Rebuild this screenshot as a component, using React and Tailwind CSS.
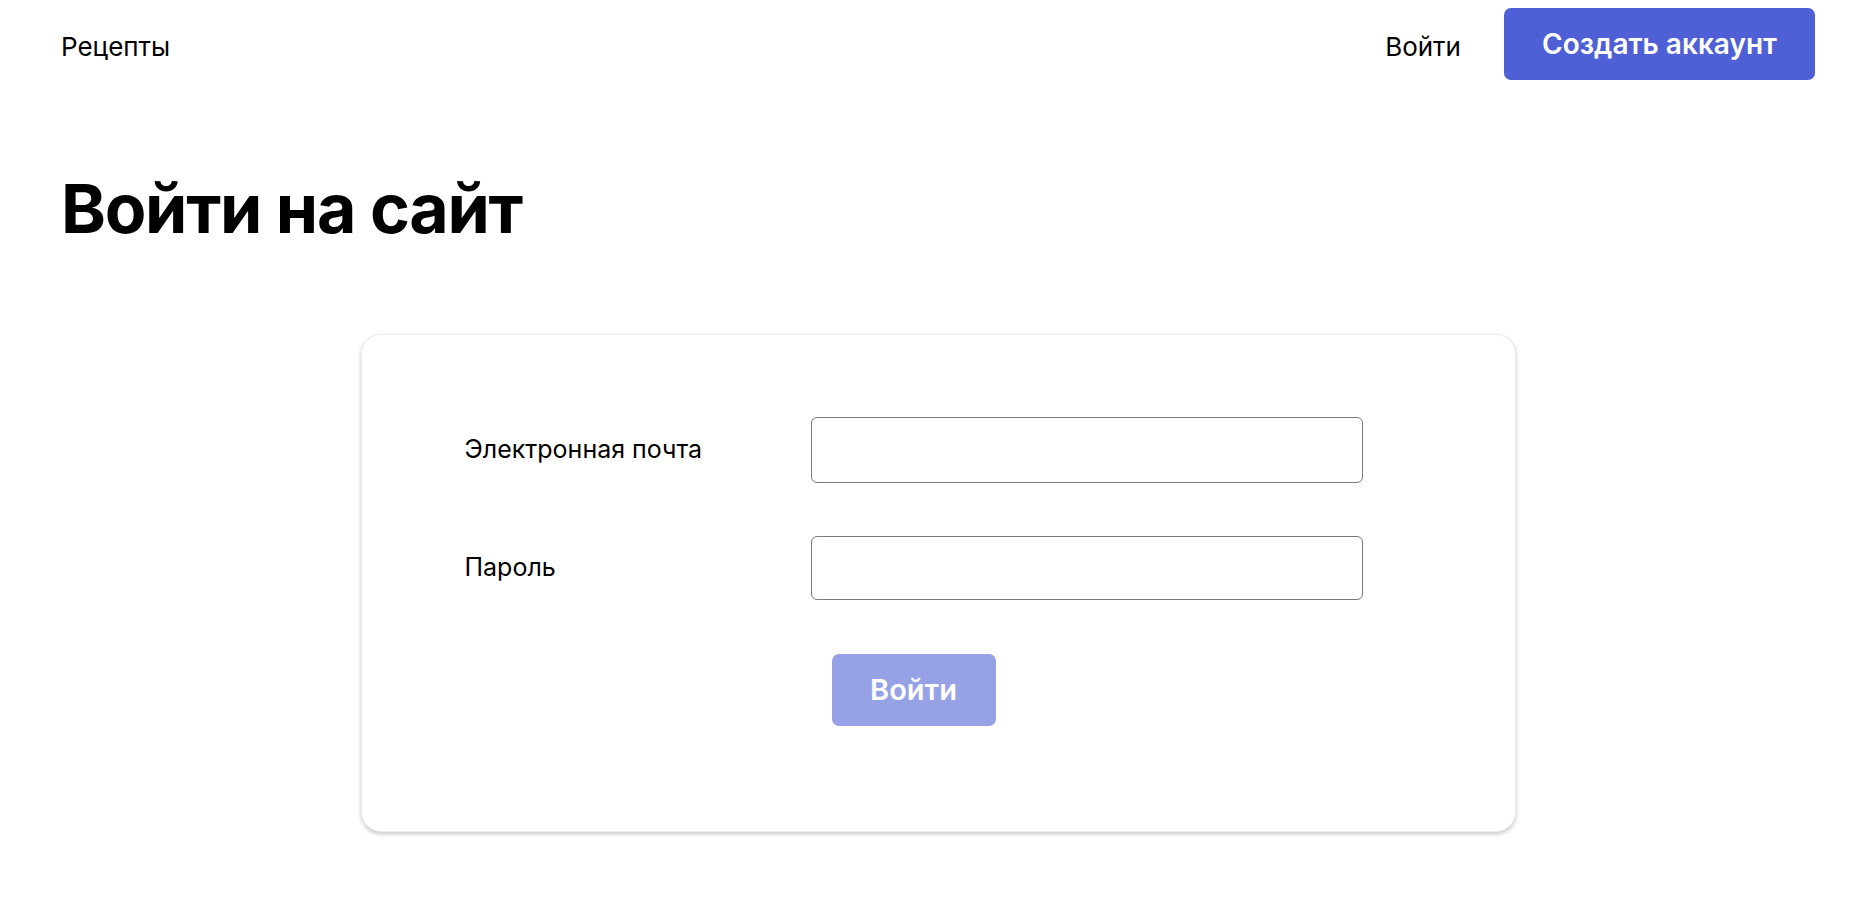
import React from 'react'

export default function App() {
  const [email, setEmail] = React.useState('')
  const [password, setPassword] = React.useState('')

  return (
    <div className="min-h-screen bg-white text-black font-['Inter','Noto_Sans',sans-serif]">
      <header className="flex items-center justify-between pl-[61px] pr-[61px] pt-2">
        <a href="#" className="mt-[6px] text-[26px] leading-none">Рецепты</a>
        <div className="flex items-center gap-[43px]">
          <a href="#" className="mt-[6px] text-[26px] leading-none">Войти</a>
          <button className="h-[72px] w-[311px] rounded-[7px] bg-[#4f5fd6] text-[28px] font-semibold text-white">
            Создать аккаунт
          </button>
        </div>
      </header>

      <main className="px-[61px]">
        <h1 className="mt-[94px] text-[68px] font-bold leading-none tracking-[-1.3px]">Войти на сайт</h1>

        <form
          className="mx-auto mt-[92px] w-[1155px] rounded-[20px] border border-[#ececec] bg-white pl-[103px] pr-[152px] pt-[82px] pb-[105px] shadow-[0_2px_4px_rgba(0,0,0,0.22)]"
          onSubmit={e => e.preventDefault()}
        >
          <div className="flex flex-col gap-[53px]">
            <label className="flex items-center">
              <span className="w-[346px] text-[25px]">Электронная почта</span>
              <input
                type="email"
                value={email}
                onChange={e => setEmail(e.target.value)}
                className="h-[66px] flex-1 rounded-[6px] border border-[#7b7b7b] px-4 text-[22px] outline-none"
              />
            </label>
            <label className="flex items-center">
              <span className="w-[346px] text-[25px]">Пароль</span>
              <input
                type="password"
                value={password}
                onChange={e => setPassword(e.target.value)}
                className="h-[64px] flex-1 rounded-[6px] border border-[#7b7b7b] px-4 text-[22px] outline-none"
              />
            </label>
          </div>
          <button
            type="submit"
            disabled
            className="ml-[367px] mt-[54px] h-[72px] w-[164px] rounded-[7px] bg-[#96a1e6] text-[29px] font-semibold text-white"
          >
            Войти
          </button>
        </form>
      </main>
    </div>
  )
}
